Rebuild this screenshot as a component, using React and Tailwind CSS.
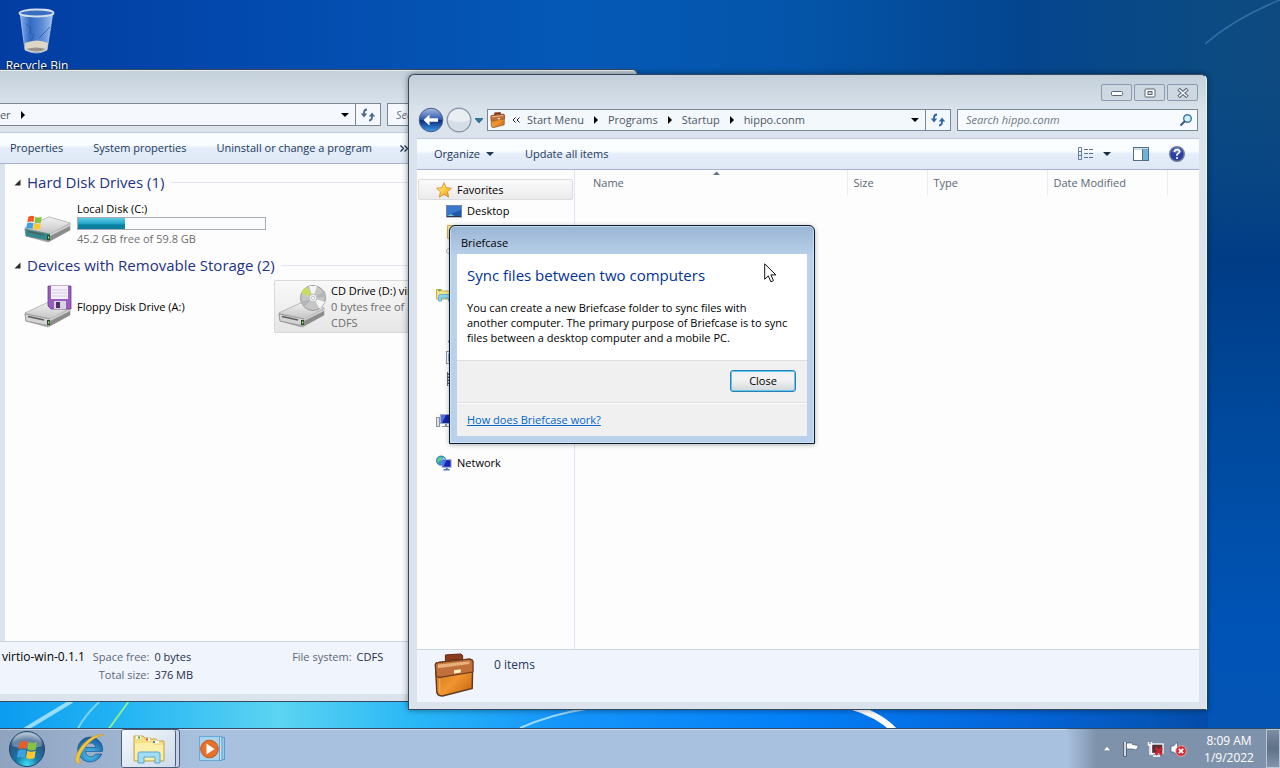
import { clsx } from 'clsx';

// Items without a label show only their icon, the name is kept for screen readers.
const SIDEBAR = [
  { label: 'Favorites', icon: StarIcon, root: true, active: true },
  { label: 'Desktop', icon: DesktopIcon },
  { name: 'Downloads', icon: FolderIcon },
  { name: 'Recent Places', icon: RecentIcon },
  null,
  { name: 'Libraries', icon: LibraryIcon, root: true },
  { name: 'Documents', icon: DocumentIcon },
  { name: 'Music', icon: MusicIcon },
  { name: 'Pictures', icon: PictureIcon },
  { name: 'Videos', icon: VideoIcon },
  null,
  { name: 'Computer', icon: ComputerIcon, root: true },
  null,
  { label: 'Network', icon: NetworkIcon, root: true },
];

const CRUMBS = ['Start Menu', 'Programs', 'Startup', 'hippo.conm'];

/* ---------- icons ---------- */

function StarIcon() {
  return (
    <svg width="16" height="16" viewBox="0 0 16 16">
      <defs>
        <linearGradient id="star" x1="0" y1="0" x2="1" y2="1">
          <stop offset="0" stopColor="#fff6a8" />
          <stop offset="0.5" stopColor="#fdd044" />
          <stop offset="1" stopColor="#e88a1c" />
        </linearGradient>
      </defs>
      <path d="M8 .8l2.2 4.9 5.2.5-3.9 3.6 1.2 5.3L8 12.4l-4.7 2.7 1.2-5.3L.6 6.2l5.2-.5z" fill="url(#star)" stroke="#d98c2b" strokeWidth=".9" />
    </svg>
  );
}

function DesktopIcon() {
  return (
    <svg width="16" height="16" viewBox="0 0 16 16">
      <rect x=".5" y="2.5" width="15" height="11.5" fill="#2458ac" stroke="#6f87a8" />
      <path d="M1 3h14v4L1 12z" fill="#3a78cc" />
      <path d="M1 13l4-2 4 2.5z" fill="#6fc7c0" />
      <path d="M1 13.5h14" stroke="#26384f" />
    </svg>
  );
}

function FolderIcon() {
  return (
    <svg width="16" height="16" viewBox="0 0 16 16">
      <path d="M1.5 14.5v-13h6l1.5 2h5.5v11z" fill="#fbe69a" stroke="#d9b34e" />
    </svg>
  );
}

function RecentIcon() {
  return (
    <svg width="16" height="16" viewBox="0 0 16 16">
      <circle cx="3" cy="6" r="2.5" fill="#fff" stroke="#b5b9c0" />
      <rect x="3.5" y="7.5" width="10" height="7" fill="#e6edf5" stroke="#75849a" />
    </svg>
  );
}

function LibraryIcon() {
  return (
    <svg width="16" height="16" viewBox="0 0 16 16">
      <path d="M.5 12V2.500h5l1 1.500h9v8z" fill="#f6e48c" stroke="#c7a94a" />
      <path d="M2 3.500h3" stroke="#58b05a" strokeWidth="1.500" />
      <path d="M2.500 14V9.500q0-2 2-2h11V14h-3v-3h-7v3z" fill="#8ed3ee" stroke="#4ba3cb" strokeWidth=".8" />
    </svg>
  );
}

function DocumentIcon() {
  return (
    <svg width="16" height="16" viewBox="0 0 16 16">
      <rect x="3.500" y="1.500" width="10" height="13" fill="#fff" stroke="#77879c" />
    </svg>
  );
}

function MusicIcon() {
  return (
    <svg width="16" height="16" viewBox="0 0 16 16">
      <ellipse cx="5" cy="12.500" rx="2.600" ry="2.200" fill="#3f4d60" />
      <path d="M7 12V2l6 2" stroke="#3f4d60" fill="none" />
    </svg>
  );
}

function PictureIcon() {
  return (
    <svg width="16" height="16" viewBox="0 0 16 16">
      <rect x=".5" y="1.500" width="14" height="12" fill="#fff" stroke="#8799ad" />
      <rect x="2.500" y="3.500" width="10" height="8" fill="#356fa3" />
    </svg>
  );
}

function VideoIcon() {
  return (
    <svg width="16" height="16" viewBox="0 0 16 16">
      <rect x="1" y="1" width="14" height="14" fill="#4d5864" />
      <path d="M2.500 1v14M13.500 1v14" stroke="#fff" strokeWidth="1.400" strokeDasharray="1.500 1.500" />
      <rect x="4" y="3" width="8" height="10" fill="#68a5dc" />
    </svg>
  );
}

function ComputerIcon() {
  return (
    <svg width="16" height="16" viewBox="0 0 16 16">
      <rect x=".5" y="4.500" width="3" height="9" fill="#dfe3e8" stroke="#8b94a0" />
      <rect x="4.500" y="1.500" width="11" height="9" fill="#1626a8" stroke="#9fb0d0" />
      <path d="M5 2h5L6 10H5z" fill="#4f6fe0" />
      <path d="M9 11h2v2h3v1H6v-1h3z" fill="#8b94a0" />
    </svg>
  );
}

function NetworkIcon() {
  return (
    <svg width="16" height="16" viewBox="0 0 17 16">
      <circle cx="5.500" cy="5.500" r="5" fill="#2f8fd0" stroke="#2b6ea5" strokeWidth=".8" />
      <path d="M2 3q3-3 5 0-1 3-3 3T3 9Q0 6 2 3z" fill="#5fd08a" />
      <path d="M7 2q3 1 3 4L8 6z" fill="#a8e6f4" />
      <rect x="6.500" y="4.500" width="9.500" height="8" fill="#1528b4" stroke="#9eb2da" />
      <path d="M7 5h4l-3 7H7z" fill="#4c74e6" />
      <path d="M10.500 13h2v1.500h2V16H8v-1.500h2.500z" fill="#5479a8" />
    </svg>
  );
}

function BriefcaseIcon({ size = 16, id }) {
  return (
    <svg width={size} height={size} viewBox="0 0 44 46">
      <defs>
        <linearGradient id={id} x1="0" y1="0" x2="1" y2="1">
          <stop offset="0" stopColor="#c66d1c" />
          <stop offset="0.55" stopColor="#f0952f" />
          <stop offset="1" stopColor="#c2610f" />
        </linearGradient>
      </defs>
      <path d="M12 11V2L28 1l2 1.500V10l-5 1V6.500l-8 .8V12z" fill="#8f3a1a" stroke="#5b2413" />
      <path d="M1.500 12Q2 10 5 9.800L36 6.500q4-.3 4.500 2.500l-.5 28L9 45q-5 0-6-4z" fill={`url(#${id})`} stroke="#5e3a1c" strokeWidth="1.500" />
      <path d="M1.500 12Q2 10 5 9.800L36 6.500q4-.3 4.800 2.500v11L6 25.500l-3.500-1z" fill="#c0703a" stroke="#6d3a1a" strokeWidth="1.200" />
      <path d="M4 12l33-3.500v3L4 16z" fill="#e8b07c" />
      <path d="M21 18l7-1v3.500l-7 1z" fill="#fff0c8" />
      <path d="M6 27v14" stroke="#fbbf68" strokeWidth="1.200" opacity=".7" />
    </svg>
  );
}

function RecycleBin() {
  return (
    <svg width="40" height="48" viewBox="0 0 40 48">
      <defs>
        <linearGradient id="bin" x1="0" x2="1">
          <stop offset="0" stopColor="#9cc0ee" stopOpacity=".9" />
          <stop offset="0.3" stopColor="#3f76cc" stopOpacity=".8" />
          <stop offset="0.65" stopColor="#6d9be0" stopOpacity=".8" />
          <stop offset="1" stopColor="#b8d3f4" stopOpacity=".9" />
        </linearGradient>
      </defs>
      <path d="M3 5l5 38q12 6 22 0l6-38z" fill="url(#bin)" stroke="#a9c6ee" strokeWidth=".8" />
      <path d="M8 36q12-5 23 0l-1 7q-11 5-22 0z" fill="#ddd5c6" />
      <path d="M9 42q10-3 20 0-9 5-20 0z" fill="#99958c" />
      <path d="M9 17l5 4-1 5 4 2-3 6M33 20L22 31" stroke="#1f4ea8" fill="none" opacity=".7" />
      <ellipse cx="19.500" cy="6" rx="17" ry="3.500" fill="#3a6cc0" stroke="#d4dfec" strokeWidth="1.800" />
    </svg>
  );
}

function DriveBody({ face = '#d4d4d4' }) {
  return (
    <>
      <defs>
        <linearGradient id="drive-top" x1="0" y1="0" x2="0" y2="1">
          <stop offset="0" stopColor="#f2f2f2" />
          <stop offset="1" stopColor="#c4c4c4" />
        </linearGradient>
      </defs>
      <path d="M1 30L25 19l21 6v7L24 44 2 38z" fill="#b5b5b5" stroke="#8b8b8b" strokeWidth=".6" />
      <path d="M1 30L25 19l21 6-20 11z" fill="url(#drive-top)" stroke="#b8b8b8" strokeWidth=".6" />
      <path d="M1 31l25 5v7L2 38z" fill={face} stroke="#7f7f7f" strokeWidth=".6" />
      <path d="M4 33.500l16 3.500" stroke="#5b5b5b" strokeWidth="1.400" />
      <path d="M26 36l20-10v6L26 43z" fill="#8c8c8c" />
      <path d="M26 36l20-10v2L26 38z" fill="#d0d0d0" />
      <rect x="23" y="37" width="3" height="5" fill="#2a4a2a" />
      <rect x="24" y="38.500" width="1.300" height="2" fill="#9df07a" />
    </>
  );
}

function WinFlag() {
  return (
    <>
      <path d="M1.500 2.500q4-2.500 7.500-.8L8 8.500Q4.500 7 .5 9z" fill="#ee5a24" />
      <path d="M10 2q4 2 8 0l-1 7q-4 1.800-8 0z" fill="#86c440" />
      <path d="M0 10.300q4-2 7.700-.5L6.700 17Q3 15.300-1 17z" fill="#3f9fe0" />
      <path d="M8.800 10.200q4 1.800 8 0l-1 7q-4 1.800-8 0z" fill="#fbc72c" />
    </>
  );
}

function LocalDiskIcon() {
  return (
    <svg width="48" height="48" viewBox="0 0 48 48">
      <g transform="translate(0 -2)">
        <DriveBody face="#2e8b90" />
        <g transform="translate(3 17) scale(.82)"><WinFlag /></g>
      </g>
    </svg>
  );
}

function FloppyIcon() {
  return (
    <svg width="48" height="48" viewBox="0 0 48 48">
      <DriveBody />
      <path d="M24 3h23v23H27l-3-3z" fill="#9a5cc0" stroke="#6c3f90" strokeWidth=".8" />
      <rect x="27" y="3" width="17" height="13" fill="#f4f1f8" />
      <path d="M28 7h15M28 10h15M28 13h15" stroke="#c9c2d4" strokeWidth=".8" />
      <rect x="30" y="18" width="12" height="8" fill="#d8d3e0" />
      <rect x="32" y="19" width="4" height="6" fill="#4a2f68" />
    </svg>
  );
}

function CdDriveIcon() {
  return (
    <svg width="48" height="48" viewBox="0 0 48 48">
      <DriveBody />
      <circle cx="35" cy="15" r="12.500" fill="#c6c6c6" stroke="#9a9a9a" />
      <path d="M35 15L23 10q2-5 6-6z" fill="#c8dc60" />
      <path d="M35 15l-4-12h8zM35 15l12 4-5 7z" fill="#f4f4f4" />
      <path d="M35 15l12-7 1 6zM35 15l-9 9-4-5z" fill="#b2b6ba" />
      <circle cx="35" cy="15" r="4" fill="#eceef0" stroke="#aaa" strokeWidth=".7" />
      <circle cx="35" cy="15" r="1.600" fill="#fff" stroke="#999" strokeWidth=".5" />
    </svg>
  );
}

function StartOrb() {
  return (
    <svg width="38" height="38" viewBox="0 0 38 38">
      <defs>
        <radialGradient id="orb" cx=".5" cy=".95" r=".95">
          <stop offset="0" stopColor="#3fe0f4" />
          <stop offset="0.35" stopColor="#1878a8" />
          <stop offset="0.75" stopColor="#2c5580" />
          <stop offset="1" stopColor="#b4c8da" />
        </radialGradient>
      </defs>
      <circle cx="19" cy="19" r="17.500" fill="url(#orb)" stroke="#1e4468" />
      <path d="M4 16Q5 3 19 3t15 13q-14 5-30 0z" fill="#fff" opacity=".28" />
      <g transform="translate(10 10) scale(1.050)"><WinFlag /></g>
    </svg>
  );
}

function IeIcon() {
  return (
    <svg width="32" height="32" viewBox="0 0 32 32">
      <defs>
        <radialGradient id="ie" cx=".5" cy=".7" r=".7">
          <stop offset="0" stopColor="#4cc6f2" />
          <stop offset="1" stopColor="#14589c" />
        </radialGradient>
      </defs>
      <path
        fillRule="evenodd"
        fill="url(#ie)"
        stroke="#134a84"
        strokeWidth=".6"
        d="M17 4a12.500 12.500 0 0 1 12.500 14.500H12.500c.5 6 7.500 7 10 2.500h6.300A12.500 12.500 0 1 1 17 4zM12.500 14.500h10.200c-.7-6-9.400-6-10.200 0z"
      />
      <path d="M31 2C20 0 7 11 3 24c-1 5 1 7 5 6C4 28 7 20 13 13S25 3 31 2z" fill="#f5c63c" stroke="#d09a20" strokeWidth=".6" />
    </svg>
  );
}

function ExplorerIcon() {
  return (
    <svg width="34" height="32" viewBox="0 0 34 32">
      <path d="M2 28V3h9l2 2h4l2 1h5l2 2h6v20z" fill="#f6de84" stroke="#c8a548" />
      <path d="M4 4.500h5M14 6.500h4M21 9h6" stroke="#fff" strokeWidth="2.500" />
      <path d="M6 4.500h2" stroke="#3aa64a" strokeWidth="2" />
      <path d="M14 6.500h2" stroke="#d8452e" strokeWidth="2" />
      <path d="M21 9h2" stroke="#3c8ad0" strokeWidth="2" />
      <path d="M3 10h17l2 2h9v15H3z" fill="#fbedaa" />
      <path d="M6 30V21q0-2 2-2h18q2 0 2 2v9h-5v-6H12v6z" fill="#a4dcf4" stroke="#58a8d0" />
    </svg>
  );
}

function MediaPlayerIcon() {
  return (
    <svg width="28" height="28" viewBox="0 0 28 28">
      <path d="M23 2.500h3.500v22H23z" fill="#9ecdea" stroke="#5a9cc6" />
      <path d="M20 1.500h4v24h-4z" fill="#bfe0f4" stroke="#5a9cc6" />
      <rect x="1.500" y="1.500" width="20" height="24" fill="#a9d4ee" stroke="#6aa8cf" />
      <circle cx="11.500" cy="14" r="8.800" fill="#e8702a" stroke="#c4531a" />
      <path d="M8.500 8.500l8 5.500-8 5.500z" fill="#fff" />
    </svg>
  );
}

function RefreshIcon({ color = '#2f66a8' }) {
  return (
    <svg width="16" height="14" viewBox="0 0 16 14">
      <path d="M7 1.500Q4 1.500 4 5v3" fill="none" stroke={color} strokeWidth="1.800" />
      <path d="M.8 5.500h6.400L4 9.500z" fill={color} />
      <path d="M9 12.500q3 0 3-3.500V7" fill="none" stroke={color} strokeWidth="1.800" />
      <path d="M8.800 8.500h6.400L12 4.500z" fill={color} />
    </svg>
  );
}

function CaretDown({ className = 'fill-black' }) {
  return (
    <svg width="8" height="4" viewBox="0 0 8 4" className={className}>
      <path d="M0 0h8L4 4z" />
    </svg>
  );
}

function CaretRight() {
  return (
    <svg width="4" height="8" viewBox="0 0 4 8">
      <path d="M0 0v8l4-4z" />
    </svg>
  );
}

function MagnifierIcon() {
  return (
    <svg width="14" height="14" viewBox="0 0 14 14">
      <circle cx="8.500" cy="5.500" r="3.800" fill="#d4f0fa" stroke="#3d7fb0" strokeWidth="1.500" />
      <path d="M6 8l-4.500 4.500" stroke="#3c5878" strokeWidth="2" />
    </svg>
  );
}

function ViewsIcon() {
  return (
    <svg width="16" height="14" viewBox="0 0 16 14" fill="none" stroke="#5b7088">
      <path d="M.5.5h3v12h-3zM.5 4.500h3M.5 8.500h3" strokeWidth=".9" />
      <path d="M6 2.500h4M6 6.500h4M6 10.500h4M11 2.500h4M11 6.500h4M11 10.500h4" />
    </svg>
  );
}

function PreviewPaneIcon() {
  return (
    <svg width="16" height="14" viewBox="0 0 16 14">
      <rect x=".5" y=".5" width="15" height="13" fill="#fff" stroke="#4f6f88" />
      <path d="M1 2h14" stroke="#a9bccb" />
      <rect x="10" y="2" width="5" height="11" fill="#6db4d8" />
      <path d="M9.500 2v11" stroke="#4f6f88" />
    </svg>
  );
}

function HelpIcon() {
  return (
    <svg width="16" height="16" viewBox="0 0 16 16">
      <circle cx="8" cy="8" r="7.300" fill="#2b3fa4" stroke="#6f7f9c" strokeWidth="1.400" />
      <path d="M3 6q2-4.500 5-4.500T13 6q-5 2-10 0z" fill="#7c92dc" opacity=".7" />
      <path d="M5.500 6q.2-2.400 2.600-2.400T10.500 6Q10.400 7.200 8 8.500v1.300" fill="none" stroke="#fff" strokeWidth="1.700" />
      <circle cx="8" cy="12" r="1.100" fill="#fff" />
    </svg>
  );
}

/* ---------- shared pieces ---------- */

function CaptionButton({ label, children }) {
  return (
    <button type="button" aria-label={label} className="flex h-[17px] w-[31px] items-center justify-center rounded-[2px] border border-[#8b9bad] bg-[#cdd8e3]">
      {children}
    </button>
  );
}

function GroupHeader({ children }) {
  return (
    <div className="flex h-6 items-center gap-[6px] pr-2">
      <svg width="7" height="7" viewBox="0 0 7 7"><path d="M6.500.5v6h-6z" fill="#2b2b2b" /></svg>
      <h2 className="whitespace-nowrap text-[15px] leading-5 text-[#1e3287]">{children}</h2>
      <span className="h-px flex-1 bg-[#e2e7ee]" />
    </div>
  );
}

function CommandBar({ children, className }) {
  return (
    <div className={clsx('flex h-8 shrink-0 items-center border-t border-b border-t-[#c0cbd9] border-b-[#a5b5cb] bg-linear-to-b from-[#fafdff] from-40% via-[#e4edf9] via-50% to-[#dfe8f5] text-[#1e395b]', className)}>
      {children}
    </div>
  );
}

function NavPane() {
  return (
    <nav className="w-[158px] shrink-0 border-r border-[#dbe5f2] pt-[9px]">
      <ul>
        {SIDEBAR.map((item, i) =>
          item ? (
            <li key={i}>
              <a
                href="#"
                aria-label={item.name}
                className={clsx(
                  'mx-px flex h-[21px] items-center gap-[5px] whitespace-nowrap rounded-[2px] border',
                  item.root ? 'pl-[17px]' : 'pl-[27px]',
                  item.active ? 'border-[#dcdcdc] bg-linear-to-b from-[#fafafa] to-[#ebebeb]' : 'border-transparent'
                )}
              >
                <item.icon />
                {item.label}
              </a>
            </li>
          ) : (
            <li key={i} className="h-[21px]" aria-hidden="true" />
          )
        )}
      </ul>
    </nav>
  );
}

/* ---------- windows ---------- */

function ComputerWindow() {
  return (
    <section className="absolute top-[69px] right-[642px] bottom-[66px] left-0 flex flex-col overflow-hidden rounded-tr-md border border-l-0 border-[#34495e] bg-[#d9e2ec] bg-linear-to-b from-[#c3cfda] to-[#dbe4ed] to-6%">
      <div className="h-[33px] shrink-0 border-t border-white/60" />
      <div className="flex h-[23px] shrink-0 items-center">
        <div className="flex h-full w-[356px] items-center border border-l-0 border-[#7b8794] bg-[#f5f9fe] pr-[6px] text-[#4c5764]">
          <span className="-ml-1">ter</span>
          <span className="ml-[10px] flex-1"><CaretRight /></span>
          <CaretDown />
        </div>
        <button type="button" aria-label="Refresh" className="flex h-full w-[25px] items-center justify-center border border-l-0 border-[#7b8794] bg-[#f5f9fe]">
          <RefreshIcon color="#4a6a8a" />
        </button>
        <input aria-label="Search Computer" placeholder="Search Computer" className="ml-[6px] mr-2 h-full min-w-0 flex-1 border border-[#7b8794] bg-[#f5f9fe] px-2 italic placeholder:text-[#6d7680]" />
      </div>
      <div className="h-[6px] shrink-0" />
      <CommandBar className="gap-[30px] whitespace-nowrap pl-[10px]">
        <button type="button">Properties</button>
        <button type="button">System properties</button>
        <button type="button">Uninstall or change a program</button>
        <button type="button" aria-label="More commands" className="-ml-[2px]">
          <svg width="8" height="7" viewBox="0 0 8 7" fill="none" stroke="#1c2f48" strokeWidth="1.300"><path d="M.5.5l3 3-3 3M4.500.5l3 3-3 3" /></svg>
        </button>
      </CommandBar>
      <div className="ml-1 mr-2 min-h-0 flex-1 overflow-hidden border-l border-[#dbe5f2] bg-[#fdfdfd] pt-[6px] pl-[9px]">
        <GroupHeader>Hard Disk Drives (1)</GroupHeader>
        <div className="flex h-[59px] items-center gap-[5px] pl-[10px]">
          <LocalDiskIcon />
          <div>
            <p className="leading-[17px]">Local Disk (C:)</p>
            <div className="h-[13px] w-[189px] border border-[#a9adb3] bg-[#fbfcfd]">
              <div className="h-full bg-linear-to-b from-[#5ccbe4] via-[#22a6c8] via-50% to-[#0a7f9e] to-65%" style={{ width: '25%' }} />
            </div>
            <p className="leading-[18px] text-[#6d6d6d]">45.2 GB free of 59.8 GB</p>
          </div>
        </div>
        <GroupHeader>Devices with Removable Storage (2)</GroupHeader>
        <div className="flex pt-[3px] pl-[10px]">
          <div className="mr-[10px] flex h-[53px] w-[240px] items-center gap-[5px]">
            <FloppyIcon />
            <p>Floppy Disk Drive (A:)</p>
          </div>
          <div className="flex h-[53px] w-[240px] items-center gap-[5px] rounded-[2px] border border-[#d9d9d9] bg-linear-to-b from-[#f9f9f9] to-[#e6e6e6] pl-[3px]">
            <CdDriveIcon />
            <div className="whitespace-nowrap leading-4">
              <p>CD Drive (D:) virtio-win-0.1.1</p>
              <p className="text-[#6d6d6d]">0 bytes free of 376 MB</p>
              <p className="text-[#6d6d6d]">CDFS</p>
            </div>
          </div>
        </div>
      </div>
      <footer className="mr-2 mb-[7px] flex h-[53px] shrink-0 items-start whitespace-nowrap border-t border-[#ccd6e2] bg-[#f0f4fc] pt-[6px] pl-[2px] leading-[18px] text-[#1e2f4a]">
        <span className="text-[12px] text-black">virtio-win-0.1.1</span>
        <dl className="ml-2 grid grid-cols-[auto_auto] gap-x-[5px]">
          <dt className="text-right text-[#5a6779]">Space free:</dt>
          <dd>0 bytes</dd>
          <dt className="text-right text-[#5a6779]">Total size:</dt>
          <dd>376 MB</dd>
        </dl>
        <dl className="ml-[99px] flex gap-[5px]">
          <dt className="text-[#5a6779]">File system:</dt>
          <dd>CDFS</dd>
        </dl>
      </footer>
    </section>
  );
}

function BriefcaseWindow() {
  return (
    <section className="absolute top-[74px] right-[73px] bottom-[58px] left-[408px] flex flex-col rounded-t-md border border-[#34495e] border-r-[#eef4fa] bg-[#dbe4ed] bg-linear-to-b from-[#c3cfda] to-[#dbe4ed] to-6% pr-[7px] pl-2 shadow-[0_0_6px_rgba(0,0,0,0.45)]">
      <header className="flex shrink-0 justify-end gap-[2px] pt-[9px] pr-px pb-px">
        <CaptionButton label="Minimize">
          <svg width="12" height="6" viewBox="0 0 12 6"><rect x=".5" y="1.500" width="11" height="4" rx="1" fill="#fff" stroke="#566476" /></svg>
        </CaptionButton>
        <CaptionButton label="Maximize">
          <svg width="12" height="10" viewBox="0 0 12 10"><rect x="1" y="1" width="10" height="8" rx="1" fill="#fff" stroke="#566476" /><rect x="4" y="3.500" width="4" height="3" fill="#cdd8e3" stroke="#566476" /></svg>
        </CaptionButton>
        <CaptionButton label="Close window">
          <svg width="12" height="10" viewBox="0 0 12 10"><path d="M1.500 1l9 8M10.500 1l-9 8" stroke="#566476" strokeWidth="3.600" /><path d="M2 1.500l8 7M10 1.500l-8 7" stroke="#fff" strokeWidth="1.600" /></svg>
        </CaptionButton>
      </header>

      <div className="flex h-[36px] shrink-0 items-center pr-px pl-px">
        <button type="button" aria-label="Back">
          <svg width="26" height="26" viewBox="0 0 26 26">
            <defs>
              <linearGradient id="back" x1="0" y1="0" x2="0" y2="1">
                <stop offset="0" stopColor="#a9bfe2" />
                <stop offset="0.48" stopColor="#2c56ac" />
                <stop offset="0.52" stopColor="#0b2b80" />
                <stop offset="1" stopColor="#3fa0e8" />
              </linearGradient>
            </defs>
            <circle cx="13" cy="13" r="11.800" fill="url(#back)" stroke="#4c5e84" />
            <path d="M5.500 13l6-5.500v3.800h8.500v3.400h-8.500v3.800z" fill="#fff" />
          </svg>
        </button>
        <button type="button" aria-label="Forward" className="ml-[2px]">
          <svg width="26" height="26" viewBox="0 0 26 26">
            <circle cx="13" cy="13" r="11.800" fill="#d5dde6" stroke="#8592a4" strokeWidth="1.200" />
            <path d="M2 13Q3 2.500 13 2.500T24 13q-11 4-22 0z" fill="#e9eef3" />
          </svg>
        </button>
        <button type="button" aria-label="Recent pages" className="mr-1 ml-[3px]">
          <svg width="8" height="5" viewBox="0 0 8 5"><path d="M0 .5h8L4 5z" fill="#2d76a8" stroke="#1c4468" strokeWidth=".6" /></svg>
        </button>
        <div className="flex h-[22px] min-w-0 flex-1 items-center border border-[#7b8794] bg-[#f3f8fd] pl-[2px] text-[#4c5764]">
          <BriefcaseIcon id="case-small" />
          <svg width="8" height="6" viewBox="0 0 8 6" className="ml-[6px] mr-[7px]" fill="none" stroke="#222"><path d="M3.500.5L1 3l2.500 2.500M7.500.5L5 3l2.500 2.500" /></svg>
          <ol className="flex flex-1 items-center gap-[10px] whitespace-nowrap">
            {CRUMBS.map((crumb, i) => (
              <li key={crumb} className="flex items-center gap-[10px]">
                {i > 0 && <CaretRight />}
                <a href="#">{crumb}</a>
              </li>
            ))}
          </ol>
          <button type="button" aria-label="Previous locations" className="px-[6px]"><CaretDown /></button>
        </div>
        <button type="button" aria-label="Refresh" className="flex h-[22px] w-[25px] items-center justify-center border border-l-0 border-[#7b8794] bg-[#f3f8fd]">
          <RefreshIcon />
        </button>
        <label className="ml-[6px] flex h-[22px] w-[241px] items-center border border-[#7b8794] bg-[#f7fbff] pr-1 pl-2">
          <input aria-label="Search hippo.conm" placeholder="Search hippo.conm" className="min-w-0 flex-1 bg-transparent italic outline-none placeholder:text-[#6d7680]" />
          <MagnifierIcon />
        </label>
      </div>

      <CommandBar className="pr-[14px] pl-[17px]">
        <button type="button" className="flex items-center gap-[6px]">
          Organize <CaretDown className="fill-[#1e395b]" />
        </button>
        <button type="button" className="ml-[31px]">Update all items</button>
        <span className="flex-1" />
        <button type="button" aria-label="Change your view"><ViewsIcon /></button>
        <button type="button" aria-label="More options" className="ml-[9px]"><CaretDown className="fill-[#1c2b40]" /></button>
        <button type="button" aria-label="Show the preview pane" className="ml-[22px]"><PreviewPaneIcon /></button>
        <button type="button" aria-label="Get help" className="ml-5"><HelpIcon /></button>
      </CommandBar>

      <div className="flex min-h-0 flex-1 bg-[#fdfdfe]">
        <NavPane />
        <main className="min-w-0 flex-1">
          <table className="w-full table-fixed text-left text-[#5a6674]">
            <thead>
              <tr className="h-[25px] [&>th]:border-r [&>th]:border-[#e6edf4] [&>th]:p-0 [&>th]:pl-[6px] [&>th]:font-normal">
                <th className="relative">
                  <span className="pl-3">Name</span>
                  <svg width="7" height="4" viewBox="0 0 7 4" className="absolute top-px left-[138px]"><path d="M0 4l3.500-3.500L7 4z" fill="#5f7688" /></svg>
                </th>
                <th className="w-20">Size</th>
                <th className="w-[120px]">Type</th>
                <th className="w-[120px]">Date Modified</th>
                <td className="w-8" />
              </tr>
            </thead>
          </table>
        </main>
      </div>

      <footer className="mb-[7px] flex h-[53px] shrink-0 items-start border-t border-[#ccd6e2] bg-[#f0f4fd] pt-[3px] pl-4">
        <BriefcaseIcon size={44} id="case-large" />
        <p className="ml-[17px] text-[12px] leading-6 text-[#1e395b]">0 items</p>
      </footer>
    </section>
  );
}

function SyncDialog() {
  return (
    <section
      role="dialog"
      aria-labelledby="sync-title"
      className="absolute top-[225px] left-[449px] w-[366px] rounded-t-md border border-[#0c1c2c] bg-[#b9d1ea] bg-linear-to-b from-[#9ab5d5] to-[#b9d1ea] to-14% px-[7px] pb-[7px] shadow-[inset_0_0_0_1px_rgba(220,240,255,0.6),0_1px_5px_rgba(0,0,0,0.3)]"
    >
      <header className="flex h-7 items-center pt-[6px] pl-1">Briefcase</header>
      <div className="border-b border-[#dfdfdf] bg-white px-[10px] pt-[9px] pb-[15px]">
        <h1 id="sync-title" className="text-[15px] leading-6 text-[#003399]">Sync files between two computers</h1>
        <p className="mt-[13px] leading-[15px]">
          You can create a new Briefcase folder to sync files with<br />
          another computer. The primary purpose of Briefcase is to sync<br />
          files between a desktop computer and a mobile PC.
        </p>
      </div>
      <div className="flex justify-end bg-[#f0f0f0] px-[11px] pt-[9px] pb-[10px]">
        <button type="button" className="h-[22px] w-[66px] rounded-[3px] border border-[#2c7fb0] bg-linear-to-b from-[#f2f2f2] from-45% to-[#d3d8db] shadow-[inset_0_0_0_1px_#5fc8ee]">
          Close
        </button>
      </div>
      <div className="flex h-[34px] items-center border-t border-[#dfdfdf] bg-[#f0f0f0] pl-[10px] shadow-[inset_0_1px_0_#fff]">
        <a href="#" className="text-[#0066cc] underline">How does Briefcase work?</a>
      </div>
    </section>
  );
}

/* ---------- desktop ---------- */

function Wallpaper() {
  return (
    <svg className="absolute inset-0 h-full w-full" viewBox="0 0 1280 768" preserveAspectRatio="none">
      <defs>
        <linearGradient id="sky">
          <stop offset="0" stopColor="#023da2" />
          <stop offset="0.2" stopColor="#034aae" />
          <stop offset="0.45" stopColor="#0559b6" />
          <stop offset="0.62" stopColor="#0455aa" />
          <stop offset="0.8" stopColor="#04458f" />
          <stop offset="0.92" stopColor="#0a4a84" />
          <stop offset="1" stopColor="#0e4a80" />
        </linearGradient>
        <linearGradient id="horizon">
          <stop offset="0" stopColor="#0c9cf0" />
          <stop offset="0.1" stopColor="#22b4f4" />
          <stop offset="0.23" stopColor="#5cd4f2" />
          <stop offset="0.34" stopColor="#2ab8f6" />
          <stop offset="0.46" stopColor="#1596fa" />
          <stop offset="0.65" stopColor="#0480f8" />
          <stop offset="0.85" stopColor="#0464d8" />
          <stop offset="0.95" stopColor="#0456b8" />
          <stop offset="1" stopColor="#044ca8" />
        </linearGradient>
        <linearGradient id="side" x1="0" y1="0" x2="0" y2="1">
          <stop offset="0" stopColor="#064785" stopOpacity="0" />
          <stop offset="0.28" stopColor="#003c86" />
          <stop offset="0.55" stopColor="#004a9e" />
          <stop offset="0.85" stopColor="#0054b6" />
          <stop offset="1" stopColor="#0454b4" />
        </linearGradient>
      </defs>
      <rect width="1280" height="768" fill="url(#sky)" />
      <rect x="1180" y="76" width="100" height="654" fill="url(#side)" />
      <rect y="698" width="1208" height="70" fill="url(#horizon)" />
      <path d="M24 730L72 701" stroke="#b8ecfc" strokeWidth="4" opacity=".8" />
      <path d="M77 730q8-15 22-28" stroke="#9fe4fa" strokeWidth="2" fill="none" opacity=".7" />
      <path d="M108 730l21-29" stroke="#8df08c" strokeWidth="2" />
      <path d="M520 728q32-14 66-19" stroke="#bdeafc" strokeWidth="2" fill="none" opacity=".8" />
      <path d="M850 706q28 8 44 24" stroke="#fff" strokeWidth="6" fill="none" />
      <path d="M1205 44Q1235 18 1280 0" stroke="#5a94c0" strokeWidth="1.500" fill="none" opacity=".5" />
    </svg>
  );
}

function Taskbar() {
  return (
    <footer className="absolute inset-x-0 bottom-0 flex h-10 items-center border-t border-[#2f4a68] bg-linear-to-r from-[#8fa3bf] via-[#a8c1de] via-16% to-[#a8c1de] shadow-[inset_0_1px_0_rgba(255,255,255,0.45)]">
      <button type="button" aria-label="Start" className="ml-2"><StartOrb /></button>
      <button type="button" aria-label="Internet Explorer" className="ml-[27px]"><IeIcon /></button>
      <button type="button" aria-label="Windows Explorer" className="ml-4 flex h-full w-[59px] rounded-[3px] border border-[#4c5f78] bg-[#c3d2e4]">
        <span className="flex h-full w-[54px] items-center justify-center rounded-[2px] border-r border-[#4c5f78] bg-linear-to-br from-[#f4f8fc] to-[#cddbea]">
          <ExplorerIcon />
        </span>
      </button>
      <button type="button" aria-label="Windows Media Player" className="ml-[18px]"><MediaPlayerIcon /></button>
      <div className="ml-auto flex h-full items-center bg-linear-to-r from-[#a8c1de] to-[#7f92ac] to-14% pl-[36px] text-white">
        <button type="button" aria-label="Show hidden icons">
          <svg width="8" height="5" viewBox="0 0 8 5"><path d="M4 .3L7.800 4.700H.2z" fill="#fff" stroke="#4c5e78" strokeWidth=".5" /></svg>
        </button>
        <svg width="18" height="16" viewBox="0 0 18 16" className="ml-3">
          <path d="M2 1v14.500" stroke="#26384e" strokeWidth="3" />
          <path d="M2 1v14" stroke="#fff" strokeWidth="1.600" />
          <path d="M3.500 2h6v1.500l6 1-2 4.500-4.500-1H3.500z" fill="#fff" stroke="#43566e" strokeWidth=".7" />
        </svg>
        <svg width="17" height="16" viewBox="0 0 17 16" className="ml-[6px]">
          <rect x="4.500" y="3" width="11.500" height="9.500" fill="#5a3038" stroke="#fff" strokeWidth="1.300" />
          <path d="M1.500 1v3h3V1M3 4v9h3M6 15h7" stroke="#fff" strokeWidth="1.400" fill="none" />
          <path d="M8.500 7l6.500 6.500M15 7l-6.500 6.500" stroke="#c82434" strokeWidth="2.600" />
        </svg>
        <svg width="18" height="16" viewBox="0 0 18 16" className="ml-[6px]">
          <path d="M1 5h2.500L7.500 1v13L3.500 11H1z" fill="#fff" stroke="#43566e" strokeWidth=".7" />
          <circle cx="11" cy="10" r="5.300" fill="#d42a34" stroke="#f0b0b0" strokeWidth=".8" />
          <path d="M8.800 7.800l4.400 4.400M13.200 7.800l-4.400 4.400" stroke="#fff" strokeWidth="1.700" />
        </svg>
        <time className="mr-[11px] ml-[15px] w-[52px] whitespace-nowrap text-center text-[12px] leading-[17px]">
          8:09 AM<br />1/9/2022
        </time>
        <button type="button" aria-label="Show desktop" className="h-full w-[14px] border border-[#b9c6d6] bg-linear-to-b from-[#7c8da4] via-[#5f7188] to-[#8294aa]" />
      </div>
    </footer>
  );
}

export default function App() {
  return (
    <div className="relative h-screen cursor-default overflow-hidden bg-[#0454b2] font-['Open_Sans','Noto_Sans',sans-serif] text-[11px] leading-4 text-black">
      <Wallpaper />
      <div className="absolute top-[7px] left-0 flex w-[74px] flex-col items-center whitespace-nowrap text-[12px] text-white [text-shadow:0_1px_2px_#000]">
        <RecycleBin />
        <span className="mt-[3px]">Recycle Bin</span>
      </div>
      <ComputerWindow />
      <BriefcaseWindow />
      <SyncDialog />
      <Taskbar />
      <svg width="14" height="20" viewBox="0 0 14 20" className="absolute top-[263px] left-[764px]">
        <path d="M.7.8v15.400l3.600-3.300 2.600 5.900 2.600-1.200-2.600-5.700h5z" fill="#fff" stroke="#111" />
      </svg>
    </div>
  );
}
